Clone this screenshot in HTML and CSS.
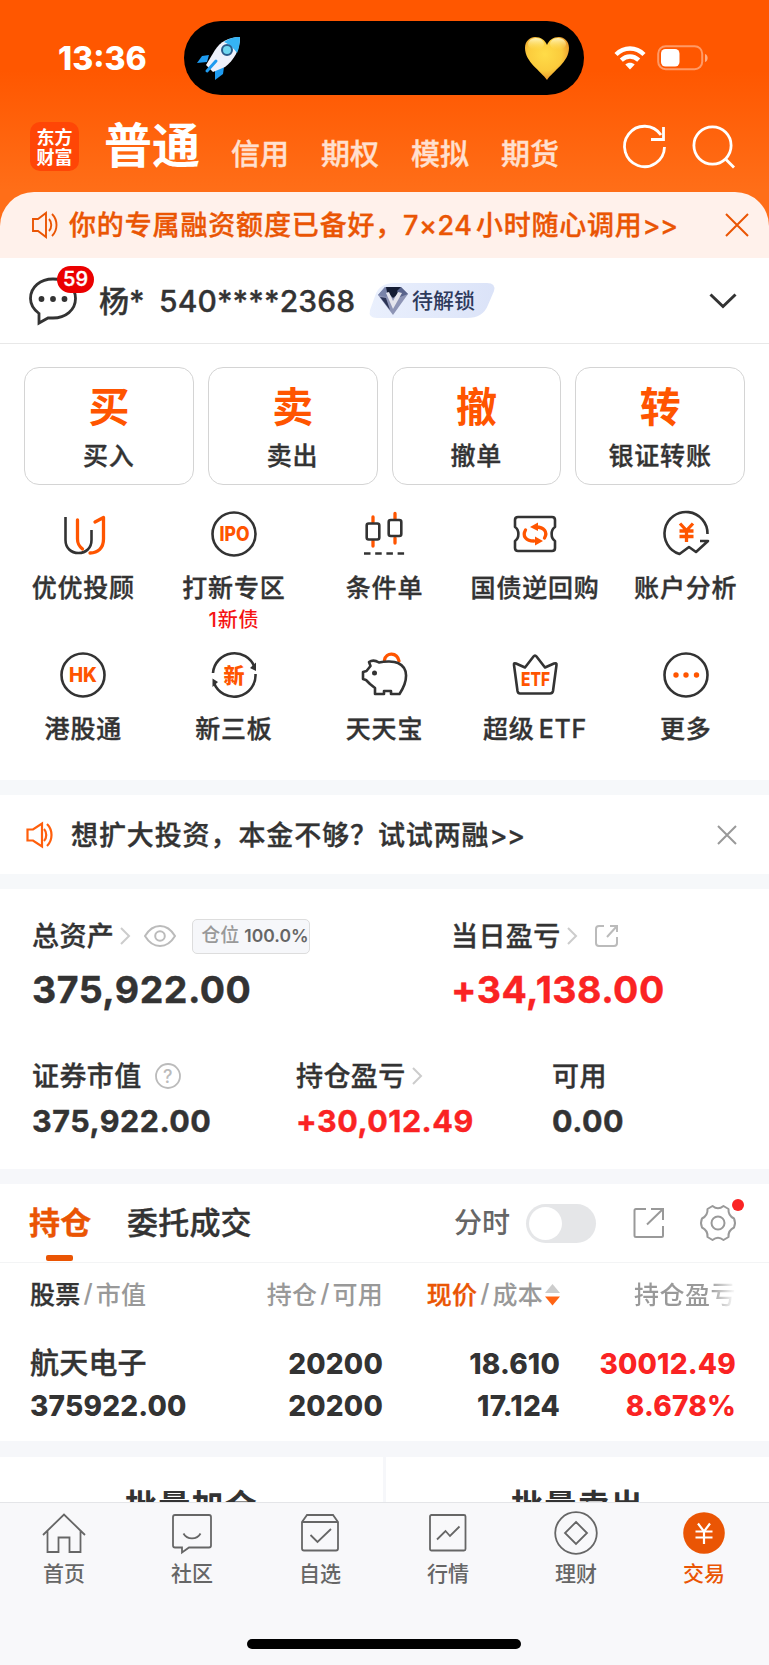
FILE: index.html
```
<!DOCTYPE html>
<html lang="zh-CN">
<head>
  <meta charset="UTF-8">
  <meta name="viewport" content="width=device-width, initial-scale=1">
  <title>交易</title>
  <link rel="stylesheet" href="styles.css">
</head>
<body>
<header class="header">
  <div class="status">
    <span class="time">13:36</span>
    <div class="island">
      <svg width="44" height="44" viewBox="0 0 44 44">
        <path d="M12 19L5 20L0 27L10 26Z" fill="#1e9bf0"/>
        <path d="M27 31L26 38L18 44L18 33Z" fill="#1e9bf0"/>
        <path d="M43 1C32 1 23 6 18 14L9 29L16 36L28 31C37 24 43 14 43 1Z" fill="#eef1fb"/>
        <path d="M43 1C36 1 31 3 27 6C31 8 37 12 40 17C42 13 43 7 43 1Z" fill="#35b4f5"/>
        <circle cx="30" cy="14" r="5" fill="#6fd6f0" stroke="#2a5c8c" stroke-width="2"/>
        <path d="M19 25L10 35" stroke="#1e9bf0" stroke-width="3" stroke-linecap="round"/>
      </svg>
      <svg width="46" height="45" viewBox="0 0 46 45">
        <defs>
          <radialGradient id="gold" cx=".45" cy=".4" r=".65">
            <stop offset="0" stop-color="#ffdc48"/>
            <stop offset=".6" stop-color="#fbcb3c"/>
            <stop offset="1" stop-color="#e58a26"/>
          </radialGradient>
          <linearGradient id="shine" x1="0" y1="0" x2="0" y2="1">
            <stop offset="0" stop-color="#fff6c0"/>
            <stop offset="1" stop-color="#ffdf5c" stop-opacity="0"/>
          </linearGradient>
        </defs>
        <path d="M23 44C17 35 1 26 1 12C1 5 6 1 11 1C17 1 21 4 23 9C25 4 29 1 35 1C40 1 45 5 45 12C45 26 29 35 23 44Z" fill="url(#gold)"/>
        <ellipse cx="12" cy="8" rx="8" ry="6" fill="url(#shine)"/>
        <ellipse cx="34" cy="8" rx="8" ry="6" fill="url(#shine)"/>
      </svg>
    </div>
    <svg class="wifi" width="32" height="24" viewBox="0 0 32 24" fill="none" stroke="#fff" stroke-width="4.4">
      <path d="M2 8.5C10 .5 22 .5 30 8.5"/>
      <path d="M7.3 14.2C12.5 9.3 19.5 9.3 24.7 14.2"/>
      <path d="M16 23.5L11.3 18.6C14 16 18 16 20.7 18.6Z" fill="#fff" stroke="none"/>
    </svg>
    <svg width="52" height="26" viewBox="0 0 52 26">
      <rect x="1.2" y="1.2" width="44" height="23" rx="7.5" fill="none" stroke="#fff" stroke-opacity=".4" stroke-width="2"/>
      <rect x="4" y="4" width="18.5" height="17.5" rx="4.5" fill="#fff"/>
      <path d="M48 9C51.5 10 51.5 16 48 17Z" fill="#fff" fill-opacity=".5"/>
    </svg>
  </div>
  <nav class="accounts">
    <div class="logo"><div>东方</div><div>财富</div></div>
    <b class="current">普通</b>
    <span>信用</span>
    <span>期权</span>
    <span>模拟</span>
    <span>期货</span>
    <svg class="refresh" width="44" height="44" viewBox="0 0 44 44" fill="none" stroke="#fff" stroke-width="2.8">
      <path d="M41.500 22A20 20.200 0 1 1 38 10"/>
      <path d="M40.500 2V14.500H28"/>
    </svg>
    <svg width="44" height="44" viewBox="0 0 44 44" fill="none" stroke="#fff" stroke-width="2.8">
      <circle cx="20.500" cy="20.500" r="18.600"/>
      <path d="M33.500 34L42 42.500"/>
    </svg>
  </nav>
</header>

<div class="promo">
  <svg width="26" height="26" viewBox="0 0 26 26" fill="none" stroke="#ea5504" stroke-width="1.9">
    <path d="M1 7H6L14 1V25L6 19H1Z"/>
    <path d="M17 7C20 10 20 16 17 19"/>
    <path d="M20 2C26 8 26 18 20 24"/>
  </svg>
  <p><span class="promo-a">你的专属融资额度已备好，</span><span class="promo-n">7×24</span><span class="promo-b">小时随心调用<i>&gt;&gt;</i></span></p>
  <svg width="24" height="24" viewBox="0 0 24 24" stroke="#ea5504" stroke-width="2"><path d="M1 1L23 23M23 1L1 23"/></svg>
</div>

<div class="user">
  <div class="message">
    <svg width="48" height="48" viewBox="0 0 48 48" fill="none" stroke="#333" stroke-width="2.8">
      <path d="M10 46V36.500C4 32 1.500 27 1.500 21.500C1.500 10 11.500 2 24 2S46.500 10 46.500 21.500S36.500 41 24 41L19 41Z"/>
      <g fill="#333" stroke="none"><circle cx="12.500" cy="22" r="2.900"/><circle cx="24" cy="22" r="2.900"/><circle cx="35.500" cy="22" r="2.900"/></g>
    </svg>
    <span class="badge">59</span>
  </div>
  <span class="name">杨*</span>
  <span class="account">540****2368</span>
  <div class="level">
    <svg width="32" height="30" viewBox="0 0 32 30">
      <path d="M8 1H24L31 8L16 29L1 9Z" fill="#8d94b5"/>
      <path d="M8 1L1 9L9 11L16 5Z" fill="#7883a8"/>
      <path d="M9 1H24L21 8L16 12L10 6Z" fill="#141c33"/>
      <path d="M24 1L31 8L23 11L20 5Z" fill="#59648c"/>
      <path d="M9 7L16 23L25 7L21 6L16 15L12 6Z" fill="#e3e4ec"/>
      <path d="M3 11L13 24L9 12Z" fill="#2b3455"/>
    </svg>
    <span>待解锁</span>
  </div>
  <svg class="expand" width="28" height="16" viewBox="0 0 28 16" fill="none" stroke="#333" stroke-width="3"><path d="M1.500 1.500L14 13.500L26.500 1.500"/></svg>
</div>

<div class="trades">
  <div class="trade"><b>买</b><span>买入</span></div>
  <div class="trade"><b>卖</b><span>卖出</span></div>
  <div class="trade"><b>撤</b><span>撤单</span></div>
  <div class="trade"><b>转</b><span>银证转账</span></div>
</div>

<div class="tools">
  <div class="tool">
    <svg width="48" height="48" viewBox="0 0 48 48">
      <path class="line" d="M6.500 7V30C6.500 38 12 43 19.500 43C27 43 32.500 38 32.500 30V20"/>
      <path class="accent" d="M18.500 10V29C18.500 34 20 36 23.500 39"/>
      <path class="accent" d="M36 12L44.500 7.500V29C44.500 38 39 43 31 43"/>
    </svg>
    <span>优优投顾</span>
  </div>
  <div class="tool">
    <svg width="48" height="48" viewBox="0 0 48 48">
      <circle class="line" cx="24" cy="24" r="21.500"/>
      <text x="24.500" y="31" font-size="19.500" textLength="30" lengthAdjust="spacingAndGlyphs">IPO</text>
    </svg>
    <span>打新专区</span>
    <small>1新债</small>
  </div>
  <div class="tool">
    <svg width="48" height="48" viewBox="0 0 48 48">
      <path class="accent" d="M13 7V12M13 31V36M35 3.500V9M35 28V33"/>
      <rect class="line" x="6.700" y="13.500" width="12.600" height="16" rx="2"/>
      <rect class="line" x="28.700" y="10" width="12.600" height="16" rx="2"/>
      <path class="line" d="M4 43.500H44.500" stroke-dasharray="6.500 4.700"/>
    </svg>
    <span>条件单</span>
  </div>
  <div class="tool">
    <svg width="48" height="48" viewBox="0 0 48 48">
      <path class="line" d="M7 7H41Q44 7 44 10V17C39.500 20 39.500 28 44 31V38Q44 41 41 41H7Q4 41 4 38V31C8.500 28 8.500 20 4 17V10Q4 7 7 7Z"/>
      <path class="accent" d="M14.500 20C11 26 15 31 23 31M33.500 28C37 22 33 17 25 17"/>
      <path d="M19 17L27 12.500V21ZM32 31L24 26.500V35.500Z" fill="#ff5500"/>
    </svg>
    <span>国债逆回购</span>
  </div>
  <div class="tool">
    <svg width="48" height="48" viewBox="0 0 48 48">
      <path class="line" d="M45.500 24A21.500 21.500 0 1 0 17.500 44L27 37L34 42L46 31H38"/>
      <path class="accent yuan" d="M18 13.500L24.500 20.500L31 13.500M17.500 21H31.500M17.500 26.500H31.500M24.500 20.500V32"/>
    </svg>
    <span>账户分析</span>
  </div>
  <div class="tool">
    <svg width="48" height="48" viewBox="0 0 48 48">
      <circle class="line" cx="24" cy="24" r="21.500"/>
      <text x="24" y="31" font-size="20" textLength="28" lengthAdjust="spacingAndGlyphs">HK</text>
    </svg>
    <span>港股通</span>
  </div>
  <div class="tool">
    <svg width="48" height="48" viewBox="0 0 48 48">
      <path class="line" d="M3 22A21.500 21.500 0 0 1 44.500 16M45.500 23A21.500 21.500 0 0 1 4 32"/>
      <path d="M40 17L46 11.500V20ZM8 31L2.500 27.500V36Z" fill="#333"/>
      <text x="24" y="31.500" font-size="21">新</text>
    </svg>
    <span>新三板</span>
  </div>
  <div class="tool">
    <svg width="48" height="48" viewBox="0 0 48 48">
      <path class="accent" d="M24.500 9C26 1 37 1 39 10"/>
      <path class="line" d="M9 11C12 9 15 9 19 11.500C25 10 34 10 38 12C49 17 48 30 39.500 43H31V40H24V43H15V37L10 33L6 29L3 28V21L6.500 20L10.500 15Z"/>
      <circle cx="14.500" cy="22" r="2.500" fill="#333"/>
    </svg>
    <span>天天宝</span>
  </div>
  <div class="tool">
    <svg width="48" height="48" viewBox="0 0 48 48">
      <path class="line" d="M3 14Q2.500 11.500 5 12.500L14 16.500L22.500 5.500Q24 3.500 25.500 5.500L34 16.500L43 12.500Q46 11.500 45.500 14L42 40Q41.500 42.500 39 42.500H9Q7 42.500 6.500 40Z"/>
      <text x="24.500" y="34.500" font-size="19" textLength="29" lengthAdjust="spacingAndGlyphs">ETF</text>
    </svg>
    <span>超级<i>ETF</i></span>
  </div>
  <div class="tool">
    <svg width="48" height="48" viewBox="0 0 48 48">
      <circle class="line" cx="24" cy="24" r="21.500"/>
      <g fill="#ff5500"><circle cx="14" cy="24" r="2.700"/><circle cx="24" cy="24" r="2.700"/><circle cx="34.500" cy="24" r="2.700"/></g>
    </svg>
    <span>更多</span>
  </div>
</div>

<div class="tip">
  <svg width="28" height="26" viewBox="0 0 28 26" fill="none" stroke="#ff5f0c" stroke-width="2.2">
    <path d="M1.500 7.500H7L16 1.500V24.500L7 18.500H1.500Z"/>
    <path d="M18 7C21 10 21 16 18 19"/>
    <path d="M21 2C27 8 27 18 21 24"/>
  </svg>
  <p>想扩大投资，本金不够？试试两融<i>&gt;&gt;</i></p>
  <svg width="20" height="20" viewBox="0 0 20 20" stroke="#999" stroke-width="2"><path d="M1 1L19 19M19 1L1 19"/></svg>
</div>

<div class="assets">
  <div class="asset-row totals">
    <div class="asset">
      <div class="label"><span>总资产</span>
        <svg class="arrow" width="10" height="18" viewBox="0 0 10 18"><path d="M1 1L9 9L1 17"/></svg>
        <svg class="eye" width="32" height="22" viewBox="0 0 32 22" fill="none" stroke="#bbb" stroke-width="2"><path d="M1 11Q7 1 16 1T31 11Q25 21 16 21T1 11Z"/><circle cx="16" cy="11" r="4.800"/></svg>
        <div class="ratio">仓位 <em>100.0%</em></div>
      </div>
      <b>375,922.00</b>
    </div>
    <div class="asset">
      <div class="label"><span>当日盈亏</span>
        <svg class="arrow" width="10" height="18" viewBox="0 0 10 18"><path d="M1 1L9 9L1 17"/></svg>
        <svg class="share" width="24" height="24" viewBox="0 0 24 24" fill="none" stroke="#bbb" stroke-width="2"><path d="M9 2H4Q1 2 1 5V19Q1 22 4 22H19Q22 22 22 19V13M15 2H22V8M22 2L12 13"/></svg>
      </div>
      <b class="up">+34,138.00</b>
    </div>
  </div>
  <div class="asset-row details">
    <div class="asset">
      <div class="label"><span>证券市值</span>
        <svg class="help" width="26" height="26" viewBox="0 0 26 26"><circle cx="13" cy="13" r="12" fill="none" stroke="#bbb" stroke-width="1.800"/><text x="13" y="19.500" font-size="18">?</text></svg>
      </div>
      <b>375,922.00</b>
    </div>
    <div class="asset">
      <div class="label"><span>持仓盈亏</span>
        <svg class="arrow" width="10" height="18" viewBox="0 0 10 18"><path d="M1 1L9 9L1 17"/></svg>
      </div>
      <b class="up">+30,012.49</b>
    </div>
    <div class="asset">
      <div class="label"><span>可用</span></div>
      <b>0.00</b>
    </div>
  </div>
</div>

<div class="tabs">
  <span class="tab active">持仓</span>
  <span class="tab">委托成交</span>
  <span class="switch-label">分时</span>
  <span class="switch"></span>
  <svg class="export" width="32" height="32" viewBox="0 0 32 32" fill="none" stroke="#999" stroke-width="2"><path d="M13 2H3Q1.500 2 1.500 3.500V28.500Q1.500 30 3 30H28.500Q30 30 30 28.500V19M18 2H30V13M30 2L14 17.500"/></svg>
  <div class="settings">
    <svg width="36" height="36" viewBox="0 0 36 36" fill="none" stroke="#999" stroke-width="2" stroke-linejoin="round"><path d="M12.500 1Q18 5.500 23.500 1L28.500 4Q28 10.500 34 13.500Q36 18 34 22.500Q28 25.500 28.500 32L23.500 35Q18 30.500 12.500 35L7.500 32Q8 25.500 2 22.500Q0 18 2 13.500Q8 10.500 7.500 4Z"/><circle cx="18" cy="18" r="6.500"/></svg>
  </div>
</div>

<div class="holdings">
  <div class="holding-head">
    <span><b>股票</b><i>/</i>市值</span>
    <span>持仓<i>/</i>可用</span>
    <span><b class="sorted">现价</b><i>/</i>成本<svg width="15" height="22" viewBox="0 0 15 22"><path d="M0 9L7.500 0L15 9Z" fill="#ccc"/><path d="M0 12.500H15L7.500 21.500Z" fill="#ff6414"/></svg></span>
    <span class="fade">持仓盈亏</span>
  </div>
  <div class="holding">
    <span class="stock">航天电子</span>
    <span>20200</span>
    <span>18.610</span>
    <span class="up">30012.49</span>
    <span>375922.00</span>
    <span>20200</span>
    <span>17.124</span>
    <span class="up">8.678%</span>
  </div>
</div>

<div class="batch">
  <div>批量加仓</div>
  <div>批量卖出</div>
</div>

<footer class="tabbar">
  <div class="item">
    <svg width="44" height="44" viewBox="0 0 44 44"><path d="M1 23L22 2.500L43 23M5.500 19V40H16.500V25.500H27.500V40H38.500V19"/></svg>
    <span>首页</span>
  </div>
  <div class="item">
    <svg width="44" height="44" viewBox="0 0 44 44"><path d="M5 3H39Q41 3 41 5V33.500Q41 35.500 39 35.500H19L12 40.500V35.500H5Q3 35.500 3 33.500V5Q3 3 5 3ZM13.500 21.500C17 28 27 28 30.500 21.500"/></svg>
    <span>社区</span>
  </div>
  <div class="item">
    <svg width="44" height="44" viewBox="0 0 44 44"><path d="M4 10L9 3H35L40 10V36.500Q40 38.500 38 38.500H6Q4 38.500 4 36.500ZM4 10H40M12.500 23L19.500 30L33 17"/></svg>
    <span>自选</span>
  </div>
  <div class="item">
    <svg width="44" height="44" viewBox="0 0 44 44"><rect x="4" y="3" width="35.500" height="35.500" rx="1.500"/><path d="M11 27.500L19.500 19L24 24L33.500 14.500"/></svg>
    <span>行情</span>
  </div>
  <div class="item">
    <svg width="44" height="44" viewBox="0 0 44 44"><circle cx="22" cy="21" r="20.800"/><path d="M22 10L33 21L22 32L11 21Z"/></svg>
    <span>理财</span>
  </div>
  <div class="item active">
    <svg width="44" height="44" viewBox="0 0 44 44"><circle class="coin" cx="22" cy="21" r="20.800"/><path class="yen" d="M16 11.500L22 19.500L28 11.500M13.500 19.500H30.500M13.500 25.500H30.500M22 19.500V32"/></svg>
    <span>交易</span>
  </div>
  <div class="home-bar"></div>
</footer>
</body>
</html>
```
FILE: styles.css
```
* {
  box-sizing: border-box;
}

body {
  display: flex;
  flex-direction: column;
  width: 769px;
  height: 1665px;
  margin: 0;
  overflow: hidden;

  background: linear-gradient(#ff5700 70px, #ff6e18 190px);
  font-family: 'Inter', 'Noto Sans CJK SC', sans-serif;
  font-weight: 500;
  color: #333;
}

body > * {
  flex-shrink: 0;
}

svg {
  display: block;
  flex-shrink: 0;
  overflow: visible;
}

p {
  margin: 0;
}

i, em {
  font-style: normal;
}

.up {
  color: #fa2323;
}

/* medium weight is a bit thin for the labels */
.promo,
.user,
.trade span,
.tool span,
.tip,
.label span,
.tab,
.stock,
.accounts span {
  -webkit-text-stroke: .35px;
}

/* header */

.header {
  height: 192px;
  color: #fff;
}

.status {
  display: flex;
  align-items: center;
  height: 116px;
  padding-left: 58px;
}

.time {
  width: 126px;
  font-size: 32px;
  font-weight: 800;
}

.island {
  display: flex;
  align-items: center;
  justify-content: space-between;
  width: 400px;
  height: 74px;
  padding: 0 14px 0 13px;
  background: #000;
  border-radius: 37px;
}

.wifi {
  margin: 0 11px 0 30px;
}

.accounts {
  display: flex;
  align-items: center;
  height: 62px;
  padding-left: 30px;
}

.accounts span {
  width: 58px;
  margin: 9px 32px 0 0;
  font-size: 29px;
  color: #ffe0d0;
  white-space: nowrap;
}

.logo {
  width: 49px;
  height: 49px;
  margin-top: -1px;
  padding-top: 4px;
  background: #ff4606;
  border-radius: 10px;
  font-family: 'Noto Sans CJK SC', sans-serif;
  font-size: 18px;
  font-weight: 700;
  line-height: 20px;
  text-align: center;
}

.accounts .current {
  width: 96px;
  margin: -3px 31px 0 25px;
  font-size: 48px;
  font-weight: 700;
  line-height: 60px;
}

.refresh {
  margin: 0 25px 0 32px;
}

/* financing notice */

.promo {
  display: flex;
  align-items: center;
  height: 66px;
  padding: 0 20px 0 32px;
  background: #fff1eb;
  border-radius: 34px 34px 0 0;
  font-size: 27px;
  color: #ea5504;
}

.promo p {
  display: flex;
  flex: 1;
  align-items: baseline;
  margin: -3px 0 0 11px;
  white-space: nowrap;
}

.promo-a {
  width: 334px;
  letter-spacing: .85px;
}

.promo-n {
  width: 73px;
  letter-spacing: .5px;
}

.promo-b {
  letter-spacing: .75px;
}

.promo i,
.tip i {
  letter-spacing: -.6px;
}

/* user */

.user {
  display: flex;
  align-items: center;
  height: 86px;
  padding: 0 32px 0 29px;
  background: #fff;
  border-bottom: 1px solid #e8e8e8;
  font-size: 30px;
}

.message {
  position: relative;
  width: 70px;
}

.badge {
  position: absolute;
  top: -11px;
  left: 28px;
  width: 37px;
  height: 27px;
  background: #eb0000;
  border-radius: 14px;
  font-size: 20px;
  line-height: 27px;
  color: #fff;
  text-align: center;
}

.name {
  width: 60px;
  margin-top: -3px;
}

.account {
  width: 210px;
  letter-spacing: .1px;
  white-space: nowrap;
}

.level {
  display: flex;
  align-items: center;
  width: 126px;
  height: 35px;
  padding-left: 8px;
  background: linear-gradient(90deg, #eaf0fd, #dbe3f8);
  clip-path: path('M20 0H118Q127 0 125 8L119 22Q114 35 98 35H8Q-1 35 1 27L6 13Q10 0 26 0Z');
  font-size: 21px;
  color: #2e3a5c;
  -webkit-text-stroke: 0;
}

.level span {
  margin: -3px 0 0 3px;
}

.expand {
  margin-left: auto;
}

/* trade buttons */

.trades {
  display: grid;
  grid-template-columns: repeat(4, 1fr);
  gap: 14px;
  padding: 23px 24px 0;
  background: #fff;
}

.trade {
  display: flex;
  flex-direction: column;
  align-items: center;
  height: 118px;
  padding-top: 12px;
  border: 1px solid #d4d4d4;
  border-radius: 15px;
}

.trade b {
  font-size: 41px;
  font-weight: 700;
  line-height: 54px;
  color: #ff5500;
}

.trade span {
  font-size: 25px;
  line-height: 44px;
  letter-spacing: .8px;
}

.tools {
  display: grid;
  grid-template-columns: repeat(5, 1fr);
  grid-auto-rows: 141px;
  height: 295px;
  padding: 25px 8px 0;
  background: #fff;
}

.tool {
  display: flex;
  flex-direction: column;
  align-items: center;
}

.tool span {
  margin-top: 12px;
  font-size: 25px;
  line-height: 36px;
  letter-spacing: .8px;
  white-space: nowrap;
}

.tool i {
  margin-left: 4px;
}

.tool small {
  margin-top: 1px;
  font-size: 20px;
  line-height: 26px;
  letter-spacing: .8px;
  color: #f51414;
}

.tool text {
  font-weight: 800;
  fill: #ff5500;
  text-anchor: middle;
}

.line,
.accent {
  fill: none;
  stroke: #333;
  stroke-width: 2.6;
  stroke-linejoin: round;
}

.accent {
  stroke: #ff5500;
  stroke-width: 3.3;
  stroke-linecap: round;
}

.yuan {
  stroke-linecap: butt;
}

/* margin notice */

.tip {
  display: flex;
  align-items: center;
  height: 109px;
  padding: 0 32px 0 26px;
  background: #fff;
  border: solid #f6f8fa;
  border-width: 15px 0;
  font-size: 27px;
}

.tip p {
  flex: 1;
  margin: -2px 0 0 17px;
  letter-spacing: .9px;
}

/* assets */

.assets {
  height: 280px;
  background: #fff;
}

.asset-row {
  display: grid;
  padding-left: 32px;
}

.totals {
  grid-template-columns: 419px 1fr;
  height: 160px;
  padding-top: 30px;
}

.details {
  grid-template-columns: 264px 256px 1fr;
  padding-top: 10px;
}

.label {
  display: flex;
  align-items: center;
  height: 36px;
  font-size: 27px;
  letter-spacing: .4px;
  white-space: nowrap;
}

.label span {
  margin-top: -5px;
}

.label svg,
.ratio {
  position: relative;
  top: -1px;
}

.asset b {
  display: block;
  font-size: 30.5px;
  line-height: 51px;
  font-weight: 700;
  letter-spacing: .5px;
  -webkit-text-stroke: .4px;
}

.totals b {
  font-size: 37.5px;
  line-height: 70px;
}

.arrow {
  margin-left: 6px;
  fill: none;
  stroke: #ccc;
  stroke-width: 2;
}

.eye {
  margin: 0 16px 0 14px;
}

.share {
  margin-left: 18px;
}

.help {
  margin-left: 13px;
}

.help text {
  fill: #bbb;
  text-anchor: middle;
}

.ratio {
  width: 118px;
  height: 35px;
  padding-left: 8px;
  background: #f6f7fa;
  border: 1px solid #ddd;
  border-radius: 5px;
  font-size: 19px;
  line-height: 32px;
  letter-spacing: 0;
  color: #999;
}

.ratio em {
  font-size: 17.5px;
  font-weight: 600;
  color: #666;
}

/* position tabs */

.tabs {
  display: flex;
  align-items: center;
  height: 94px;
  padding-left: 29px;
  background: #fff;
  border-top: 15px solid #f6f7fa;
  border-bottom: 1px solid #f3f4f5;
}

.tab {
  position: relative;
  width: 98px;
  margin-top: -5px;
  font-size: 31px;
  letter-spacing: .2px;
  white-space: nowrap;
}

.tab.active {
  font-weight: 600;
  color: #ea5504;
}

.tab.active::after {
  content: '';
  position: absolute;
  bottom: -18px;
  left: 17px;
  width: 27px;
  height: 6px;
  background: #ea5504;
  border-radius: 2px;
}

.switch-label {
  margin: -4px 0 0 229px;
  font-size: 28px;
  color: #666;
}

.switch {
  width: 70px;
  height: 39px;
  margin-left: 16px;
  padding: 3px;
  background: #e5e6e8;
  border-radius: 20px;
}

.switch::before {
  content: '';
  display: block;
  width: 33px;
  height: 33px;
  background: #fff;
  border-radius: 50%;
}

.export {
  margin: 0 35px 0 37px;
}

.settings {
  position: relative;
}

.settings::after {
  content: '';
  position: absolute;
  top: -6px;
  right: -8px;
  width: 12px;
  height: 12px;
  background: #fa2323;
  border-radius: 50%;
}

/* holdings */

.holdings {
  height: 178px;
  background: #fff;
}

.holding-head,
.holding {
  display: grid;
  grid-template-columns: 176px 1fr 177px 176px;
  padding: 0 33px 0 30px;
}

.holding-head {
  height: 66px;
  padding-bottom: 7px;
  align-items: center;
  font-size: 25px;
  letter-spacing: .2px;
  color: #999;
}

.holding-head span {
  display: flex;
  align-items: center;
}

.holding-head b {
  font-weight: 500;
  color: #333;
  -webkit-text-stroke: .35px;
}

.holding-head .sorted {
  color: #ea5504;
}

.holding-head i {
  padding: 0 3px;
}

.holding-head svg {
  margin: 4px 0 0 2px;
}

.holding-head span:not(:first-child) {
  justify-content: flex-end;
}

.holding-head .fade {
  background: linear-gradient(90deg, #999 85%, #fff);
  -webkit-background-clip: text;
  background-clip: text;
  color: transparent;
  letter-spacing: .5px;
}

.holding {
  padding-top: 14px;
  font-size: 28px;
  font-weight: 800;
  line-height: 42px;
  letter-spacing: .2px;
}

.holding span:not(:nth-child(4n + 1)) {
  text-align: right;
}

.holding .stock {
  font-size: 29px;
  font-weight: 500;
}

.batch {
  display: grid;
  grid-template-columns: 1fr 1fr;
  gap: 3px;
  height: 61px;
  border-top: 16px solid #f6f7fa;
  background: #f6f7fa;
  overflow: hidden;
}

.batch div {
  padding-top: 23px;
  background: #fff;
  font-size: 32px;
  font-weight: 600;
  line-height: 52px;
  letter-spacing: 1.3px;
  text-align: center;
}

/* bottom bar */

.tabbar {
  display: grid;
  grid-template-columns: repeat(6, 128px);
  grid-template-rows: 136px 1fr;
  height: 163px;
  background: #f8f8fa;
  border-top: 1px solid #e4e5e8;
}

.item {
  display: flex;
  flex-direction: column;
  align-items: center;
  padding-top: 9px;
  font-size: 21px;
  color: #666;
}

.item svg {
  fill: none;
  stroke: #666;
  stroke-width: 1.8;
}

.item span {
  margin-top: 3px;
  line-height: 30px;
}

.item.active {
  color: #ea5504;
}

.item .coin {
  fill: #ea5504;
  stroke: none;
}

.item .yen {
  stroke: #fff;
  stroke-width: 2.2;
}

.home-bar {
  grid-column: 1 / -1;
  justify-self: center;
  width: 274px;
  height: 10px;
  background: #000;
  border-radius: 5px;
}
```
